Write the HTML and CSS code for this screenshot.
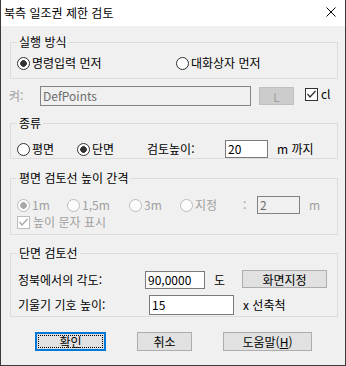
FILE: index.html
```html
<!DOCTYPE html>
<html lang="ko">
<head>
  <meta charset="UTF-8" />
  <title>북측 일조권 제한 검토</title>
  <link rel="stylesheet" href="styles.css">
</head>
<body>
  <div class="dialog">
    <div class="titlebar">
      <span class="title">북측 일조권 제한 검토</span>
      <svg class="close" width="10" height="10" viewBox="0 0 10 10">
        <path d="M0.5 0.5 L9.5 9.5 M9.5 0.5 L0.5 9.5" stroke="#000" stroke-width="1" fill="none"/>
      </svg>
    </div>

    <div class="content">
      <!-- 실행 방식 -->
      <div class="group g-mode">
        <div class="group-title">실행 방식</div>
        <div class="row r-mode">
          <label class="radio w-159 checked"><span class="dot"></span>명령입력 먼저</label>
          <label class="radio"><span class="dot"></span>대화상자 먼저</label>
        </div>
      </div>

      <!-- 레이어 -->
      <div class="layer-row">
        <span class="layer-label disabled">켜:</span>
        <div class="input input-off layer-input">DefPoints</div>
        <button class="btn btn-off btn-l">L</button>
        <label class="check">
          <span class="box"><svg width="11" height="11" viewBox="0 0 11 11"><path d="M1.5 5 L4 8 L9.5 2" stroke="#333" stroke-width="1.3" fill="none"/></svg></span>cl
        </label>
      </div>

      <!-- 종류 -->
      <div class="group g-kind">
        <div class="group-title">종류</div>
        <div class="row r-kind">
          <label class="radio w-60"><span class="dot"></span>평면</label>
          <label class="radio w-70 checked"><span class="dot"></span>단면</label>
          <span class="w-78">검토높이:</span>
          <div class="input w-43">20</div>
          <span class="after">m 까지</span>
        </div>
      </div>

      <!-- 평면 검토선 높이 간격 -->
      <div class="group g-plan">
        <div class="group-title">평면 검토선 높이 간격</div>
        <div class="row r-plan">
          <label class="radio off w-50 checked"><span class="dot"></span>1m</label>
          <label class="radio off w-62"><span class="dot"></span>1,5m</label>
          <label class="radio off w-51"><span class="dot"></span>3m</label>
          <label class="radio off w-63"><span class="dot"></span>지정</label>
          <span class="disabled w-14">:</span>
          <div class="input input-off w-43">2</div>
          <span class="disabled after">m</span>
        </div>
        <div class="row r-plan2">
          <label class="check off">
            <span class="box"><svg width="11" height="11" viewBox="0 0 11 11"><path d="M1.5 5 L4 8 L9.5 2" stroke="#a5a5a5" stroke-width="1.3" fill="none"/></svg></span>높이 문자 표시
          </label>
        </div>
      </div>

      <!-- 단면 검토선 -->
      <div class="group g-section">
        <div class="group-title">단면 검토선</div>
        <div class="row r-sec1">
          <span class="w-128">정북에서의 각도:</span>
          <div class="input w-60">90,0000</div>
          <span class="unit">도</span>
          <button class="btn btn-pick">화면지정</button>
        </div>
        <div class="row r-sec2">
          <span class="w-132">기울기 기호 높이:</span>
          <div class="input w-85 tall">15</div>
          <span class="after">x 선축척</span>
        </div>
      </div>

      <div class="buttons">
        <button class="btn btn-ok"><span class="focus">확인</span></button>
        <button class="btn btn-cancel">취소</button>
        <button class="btn btn-help">도움말(<u>H</u>)</button>
      </div>
    </div>
  </div>
</body>
</html>
```

FILE: styles.css
```css
:root {
  --face: #f0f0f0;
  --frame: #dcdcdc;
  --text: #000;
  --grey-text: #a0a0a0;
  --btn-face: #e1e1e1;
  --btn-border: #adadad;
  --focus: #0078d7;
}

body {
  margin: 0;
  padding: 0;
  font-family: "Noto Sans CJK KR", "Noto Sans", sans-serif;
  font-size: 12px;
  line-height: 16px;
  color: var(--text);
  background: var(--face);
}

.dialog {
  width: 346px;
  height: 366px;
  box-sizing: border-box;
  border: 1px solid #3a3a3a;
  border-top: none;
  background: var(--face);
}

.titlebar {
  height: 26px;
  background: #fff;
  display: flex;
  align-items: center;
  justify-content: space-between;
  padding: 0 9px 0 3px;
}

.title {
  font-size: 12px;
  margin-top: -1px;
}

.close {
  display: block;
  margin-top: -3px;
}

.content {
  display: flex;
  flex-direction: column;
}

/* Group boxes */
.group {
  box-sizing: border-box;
  width: 328px;
  margin-left: 9px;
  border: 1px solid var(--frame);
}

.group-title {
  margin: -9px 0 0 6px;
  padding: 0 2px;
  width: fit-content;
  height: 16px;
  background: var(--face);
}

.g-mode { margin-top: 16px; height: 37px; }
.g-kind { margin-top: 17px; height: 36px; }
.g-plan { margin-top: 19px; height: 57px; }
.g-section { margin-top: 18px; height: 64px; }

.row {
  display: flex;
  align-items: center;
  padding-left: 6px;
}

.r-mode { margin-top: 5px; height: 16px; }
.r-kind { margin-top: 9px; height: 18px; }
.r-plan { margin-top: 10px; height: 18px; }
.r-plan2 { margin-top: 1px; height: 14px; }
.r-sec1 { margin-top: 10px; height: 18px; }
.r-sec2 { margin-top: 6px; height: 20px; }

.w-14 { width: 14px; flex: none; }
.w-43 { width: 43px; flex: none; }
.w-50 { width: 50px; flex: none; }
.w-51 { width: 51px; flex: none; }
.w-60 { width: 60px; flex: none; }
.w-62 { width: 62px; flex: none; }
.w-63 { width: 63px; flex: none; }
.w-70 { width: 70px; flex: none; }
.w-78 { width: 78px; flex: none; }
.w-85 { width: 85px; flex: none; }
.w-128 { width: 127px; flex: none; padding-left: 1px; }
.w-132 { width: 131px; flex: none; padding-left: 1px; }
.w-159 { width: 159px; flex: none; }

.after { margin-left: 9px; }

.unit {
  width: 28px;
  padding-left: 9px;
  flex: none;
}

.disabled { color: var(--grey-text); }

/* Radios */
.radio {
  display: flex;
  align-items: center;
  gap: 2px;
}

.radio .dot {
  width: 13px;
  height: 13px;
  box-sizing: border-box;
  border: 1px solid #333;
  border-radius: 50%;
  background: #fff;
  flex: none;
}

.radio.checked .dot {
  background: radial-gradient(circle, #333 3px, #fff 3.6px);
}

.radio.off { color: var(--grey-text); }
.radio.off .dot { border-color: #bcbcbc; background: #fcfcfc; }
.radio.off.checked .dot {
  background: radial-gradient(circle, #a8a8a8 3px, #fcfcfc 3.6px);
}

/* Checkboxes */
.check {
  display: flex;
  align-items: center;
  gap: 3px;
}

.check .box {
  width: 13px;
  height: 13px;
  box-sizing: border-box;
  border: 1px solid #333;
  background: #fff;
  display: flex;
  align-items: center;
  justify-content: center;
  flex: none;
}

.check.off { color: var(--grey-text); }
.check.off .box { border-color: #bcbcbc; }

/* Edit fields */
.input {
  box-sizing: border-box;
  height: 18px;
  border: 1px solid #7a7a7a;
  background: #fff;
  padding-left: 2px;
  line-height: 16px;
  flex: none;
}

.input.tall { height: 20px; line-height: 18px; }

.input-off {
  background: var(--face);
  border-color: #838383;
  color: #6d6d6d;
}

/* Layer row */
.layer-row {
  display: flex;
  align-items: center;
  margin: 7px 0 0 8px;
  height: 20px;
}

.layer-label { width: 31px; flex: none; }

.layer-input { width: 211px; height: 20px; line-height: 18px; }

.btn-l {
  margin-left: 8px;
  width: 35px;
  height: 18px;
}

.layer-row .check { margin-left: 11px; margin-top: -4px; }

/* Buttons */
.btn {
  box-sizing: border-box;
  font-family: inherit;
  font-size: 12px;
  line-height: 15px;
  color: var(--text);
  background: var(--btn-face);
  border: 1px solid var(--btn-border);
  padding: 0;
  flex: none;
}

.btn-off {
  background: #cccccc;
  border-color: #bfbfbf;
  color: var(--grey-text);
}

.btn-pick {
  width: 85px;
  height: 18px;
  margin-top: -2px;
}

.buttons {
  display: flex;
  gap: 31px;
  margin: 15px 0 0 34px;
  height: 19px;
}

.buttons .btn { height: 19px; }

.btn-ok {
  width: 71px;
  border: 2px solid var(--focus);
  padding: 1px;
  display: flex;
}

.btn-ok .focus {
  flex: 1;
  border: 1px dotted #000;
  line-height: 11px;
}

.btn-cancel { width: 55px; }
.btn-help { width: 89px; }
```
